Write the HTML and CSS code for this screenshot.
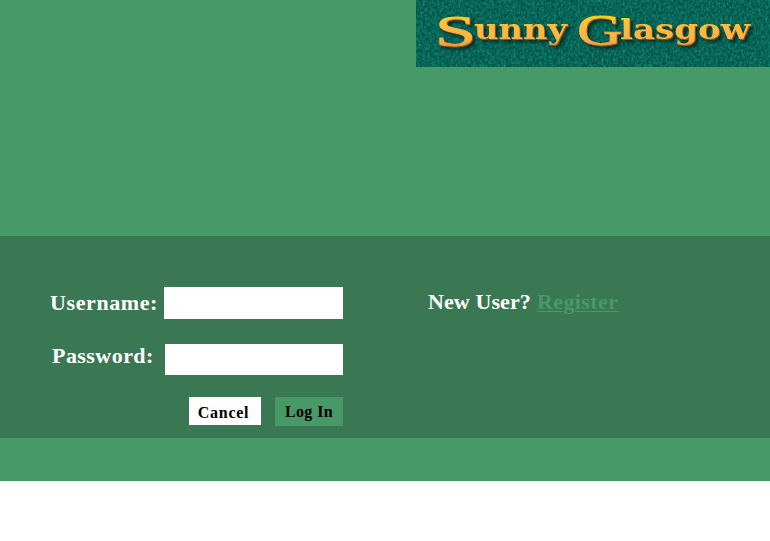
FILE: index.html
```html
<!DOCTYPE html>
<html lang="en">
<head>
<meta charset="utf-8">
<title>Sunny Glasgow</title>
<link rel="stylesheet" href="styles.css">
</head>
<body>
<div class="page">
  <header class="header">
    <svg class="logo" width="354" height="67" viewBox="0 0 354 67" role="img">
      <defs>
        <linearGradient id="gold" x1="0" y1="14" x2="0" y2="52" gradientUnits="userSpaceOnUse">
          <stop offset="0" stop-color="#ffdc00"/>
          <stop offset=".25" stop-color="#ffbf3c"/>
          <stop offset=".7" stop-color="#f9b04a"/>
          <stop offset="1" stop-color="#f0822a"/>
        </linearGradient>
        <filter id="weave" x="0" y="0" width="1" height="1" color-interpolation-filters="sRGB">
          <feTurbulence type="fractalNoise" baseFrequency=".42 .34" numOctaves="3" seed="4"/>
          <feColorMatrix values=".12 0 0 0 -.03  .36 0 0 0 .22  .32 0 0 0 .185  0 0 0 0 1"/>
        </filter>
        <filter id="shadow" x="-.1" y="-.3" width="1.2" height="1.7" color-interpolation-filters="sRGB">
          <feDropShadow dx="1" dy="1" stdDeviation=".3" flood-color="#a65a10" flood-opacity=".9" result="edge"/>
          <feDropShadow in="edge" dx="2.5" dy="2.5" stdDeviation="1.5" flood-color="#00251f" flood-opacity=".85"/>
        </filter>
      </defs>
      <rect width="354" height="67" fill="#086656"/>
      <rect width="354" height="67" filter="url(#weave)"/>
      <g class="logo-text" filter="url(#shadow)">
        <text class="initial" x="19" y="46" textLength="41" lengthAdjust="spacingAndGlyphs">S</text>
        <text x="58" y="38.5" textLength="93" lengthAdjust="spacingAndGlyphs">unny</text>
        <text class="initial" x="161" y="44.5" textLength="45" lengthAdjust="spacingAndGlyphs">G</text>
        <text x="204" y="38.5" textLength="130" lengthAdjust="spacingAndGlyphs">lasgow</text>
      </g>
    </svg>
  </header>
  <main class="panel">
    <form class="login">
      <div class="row">
        <label class="label label-user" for="user">Username:</label>
        <input class="field field-user" id="user" type="text">
      </div>
      <div class="row row-pass">
        <label class="label label-pass" for="pass">Password:</label>
        <input class="field field-pass" id="pass" type="password">
      </div>
      <div class="actions">
        <button class="button cancel" type="button">Cancel</button>
        <button class="button submit" type="button">Log In</button>
      </div>
    </form>
    <p class="signup"><span class="question">New User?</span><a class="register" href="#">Register</a></p>
  </main>
</div>
</body>
</html>
```
FILE: styles.css
```css
body {
  margin: 0;
  background: #fff;
  font-family: "Liberation Serif", serif;
  font-weight: bold;
}
.page {
  height: 481px;
  background: #479968;
}
.header {
  display: flex;
  justify-content: flex-end;
  align-items: flex-start;
  height: 236px;
}
.logo-text {
  font-family: "DejaVu Serif", serif;
  font-size: 28px;
  font-weight: bold;
  fill: url(#gold);
}
.initial {
  font-family: "Liberation Serif", serif;
  font-size: 44px;
  font-weight: normal;
  stroke: url(#gold);
  stroke-width: .8px;
}
.panel {
  display: flex;
  height: 202px;
  background: #3a7854;
}
.login {
  width: 343px;
  padding-top: 51px;
}
.row {
  display: flex;
  justify-content: space-between;
  padding-left: 50px;
}
.row-pass {
  margin-top: 25px;
  padding-left: 52px;
}
.label {
  color: #fff;
  font-size: 22px;
  line-height: 32px;
  white-space: nowrap;
}
.label-user { letter-spacing: .6px; }
.label-pass {
  letter-spacing: .45px;
  line-height: 24px;
}
.field {
  box-sizing: border-box;
  border: 0;
  padding: 0 6px;
  background: #fff;
}
.field-user { width: 179px; height: 32px; }
.field-pass { width: 178px; height: 31px; }
.actions {
  display: flex;
  justify-content: flex-end;
  align-items: flex-start;
  gap: 14px;
  margin-top: 22px;
}
.button {
  border: 0;
  padding: 0;
  color: #000;
  font: bold 16px/28px "Liberation Serif", serif;
}
.cancel {
  width: 72px;
  height: 28px;
  padding: 2px 3px 0 0;
  background: #fff;
  letter-spacing: .75px;
}
.submit {
  width: 68px;
  height: 29px;
  background: #479968;
  letter-spacing: .4px;
}
.signup {
  margin: 54px 0 0 85px;
  color: #fff;
  font-size: 22px;
  line-height: 24px;
  white-space: nowrap;
}
.question {
  display: inline-block;
  width: 109px;
  letter-spacing: .1px;
}
.register {
  color: #479968;
  letter-spacing: .4px;
  text-underline-offset: 2px;
  text-decoration-thickness: 1px;
}
```
